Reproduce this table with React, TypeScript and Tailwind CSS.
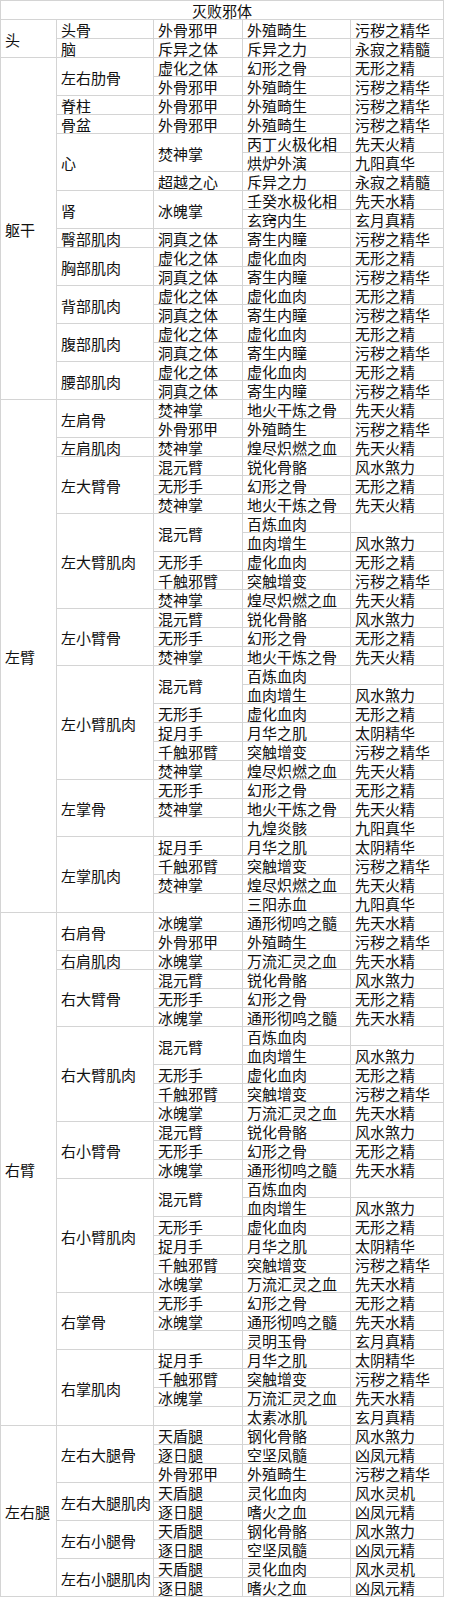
type Line = [string, string];
type Item = { skill: string; lines: Line[] };
type Part = { name: string; items: Item[] };
type Group = { name: string; parts: Part[] };

const one = (skill: string, a: string, b: string): Item => ({ skill, lines: [[a, b]] });

const wuGu = one("外骨邪甲", "外殖畸生", "污秽之精华");
const xuTi = one("虚化之体", "虚化血肉", "无形之精");
const dongZhen = one("洞真之体", "寄生内瞳", "污秽之精华");

const hunYuanGu = one("混元臂", "锐化骨骼", "风水煞力");
const wuXingGu = one("无形手", "幻形之骨", "无形之精");
const hunYuanRou: Item = { skill: "混元臂", lines: [["百炼血肉", ""], ["血肉增生", "风水煞力"]] };
const wuXingRou = one("无形手", "虚化血肉", "无形之精");
const zhuoYue = one("捉月手", "月华之肌", "太阴精华");
const qianChu = one("千触邪臂", "突触增变", "污秽之精华");

const fenGu = one("焚神掌", "地火干炼之骨", "先天火精");
const fenRou = one("焚神掌", "煌尽炽燃之血", "先天火精");
const bingGu = one("冰魄掌", "通形彻鸣之髓", "先天水精");
const bingRou = one("冰魄掌", "万流汇灵之血", "先天水精");

const groups: Group[] = [
  {
    name: "头",
    parts: [
      { name: "头骨", items: [wuGu] },
      { name: "脑", items: [one("斥异之体", "斥异之力", "永寂之精髓")] },
    ],
  },
  {
    name: "躯干",
    parts: [
      { name: "左右肋骨", items: [one("虚化之体", "幻形之骨", "无形之精"), wuGu] },
      { name: "脊柱", items: [wuGu] },
      { name: "骨盆", items: [wuGu] },
      {
        name: "心",
        items: [
          { skill: "焚神掌", lines: [["丙丁火极化相", "先天火精"], ["烘炉外演", "九阳真华"]] },
          one("超越之心", "斥异之力", "永寂之精髓"),
        ],
      },
      { name: "肾", items: [{ skill: "冰魄掌", lines: [["壬癸水极化相", "先天水精"], ["玄窍内生", "玄月真精"]] }] },
      { name: "臀部肌肉", items: [dongZhen] },
      { name: "胸部肌肉", items: [xuTi, dongZhen] },
      { name: "背部肌肉", items: [xuTi, dongZhen] },
      { name: "腹部肌肉", items: [xuTi, dongZhen] },
      { name: "腰部肌肉", items: [xuTi, dongZhen] },
    ],
  },
  {
    name: "左臂",
    parts: [
      { name: "左肩骨", items: [fenGu, wuGu] },
      { name: "左肩肌肉", items: [fenRou] },
      { name: "左大臂骨", items: [hunYuanGu, wuXingGu, fenGu] },
      { name: "左大臂肌肉", items: [hunYuanRou, wuXingRou, qianChu, fenRou] },
      { name: "左小臂骨", items: [hunYuanGu, wuXingGu, fenGu] },
      { name: "左小臂肌肉", items: [hunYuanRou, wuXingRou, zhuoYue, qianChu, fenRou] },
      { name: "左掌骨", items: [wuXingGu, fenGu, one("", "九煌炎骸", "九阳真华")] },
      { name: "左掌肌肉", items: [zhuoYue, qianChu, fenRou, one("", "三阳赤血", "九阳真华")] },
    ],
  },
  {
    name: "右臂",
    parts: [
      { name: "右肩骨", items: [bingGu, wuGu] },
      { name: "右肩肌肉", items: [bingRou] },
      { name: "右大臂骨", items: [hunYuanGu, wuXingGu, bingGu] },
      { name: "右大臂肌肉", items: [hunYuanRou, wuXingRou, qianChu, bingRou] },
      { name: "右小臂骨", items: [hunYuanGu, wuXingGu, bingGu] },
      { name: "右小臂肌肉", items: [hunYuanRou, wuXingRou, zhuoYue, qianChu, bingRou] },
      { name: "右掌骨", items: [wuXingGu, bingGu, one("", "灵明玉骨", "玄月真精")] },
      { name: "右掌肌肉", items: [zhuoYue, qianChu, bingRou, one("", "太素冰肌", "玄月真精")] },
    ],
  },
  {
    name: "左右腿",
    parts: [
      {
        name: "左右大腿骨",
        items: [one("天盾腿", "钢化骨骼", "风水煞力"), one("逐日腿", "空坚凤髓", "凶凤元精"), wuGu],
      },
      { name: "左右大腿肌肉", items: [one("天盾腿", "灵化血肉", "风水灵机"), one("逐日腿", "嗜火之血", "凶凤元精")] },
      { name: "左右小腿骨", items: [one("天盾腿", "钢化骨骼", "风水煞力"), one("逐日腿", "空坚凤髓", "凶凤元精")] },
      { name: "左右小腿肌肉", items: [one("天盾腿", "灵化血肉", "风水灵机"), one("逐日腿", "嗜火之血", "凶凤元精")] },
    ],
  },
];

// grid row spans, written out so Tailwind picks them up
const span: Record<number, string> = {
  1: "row-span-1",
  2: "row-span-2",
  3: "row-span-3",
  4: "row-span-4",
  5: "row-span-5",
  6: "row-span-6",
  9: "row-span-9",
  18: "row-span-18",
  27: "row-span-27",
};
const colStart = ["col-start-1", "col-start-2", "col-start-3", "col-start-4", "col-start-5"];

const countPart = (p: Part) => p.items.reduce((n, it) => n + it.lines.length, 0);
const countGroup = (g: Group) => g.parts.reduce((n, p) => n + countPart(p), 0);

function Cell({ col, rows = 1, children }: { col: number; rows?: number; children?: React.ReactNode }) {
  return (
    <div
      className={`${colStart[col]} ${span[rows]} bg-white flex items-center px-1 pt-[2px] leading-[16px] whitespace-nowrap`}
    >
      {children}
    </div>
  );
}

function GroupCells({ group }: { group: Group }) {
  const cells: React.ReactNode[] = [];
  group.parts.forEach((part, pi) => {
    part.items.forEach((item, ii) => {
      item.lines.forEach((line, li) => {
        const k = `${pi}-${ii}-${li}`;
        if (pi === 0 && ii === 0 && li === 0)
          cells.push(
            <Cell key={`g${k}`} col={0} rows={countGroup(group)}>
              {group.name}
            </Cell>
          );
        if (ii === 0 && li === 0)
          cells.push(
            <Cell key={`p${k}`} col={1} rows={countPart(part)}>
              {part.name}
            </Cell>
          );
        if (li === 0)
          cells.push(
            <Cell key={`s${k}`} col={2} rows={item.lines.length}>
              {item.skill}
            </Cell>
          );
        cells.push(
          <Cell key={`a${k}`} col={3}>
            {line[0]}
          </Cell>
        );
        cells.push(
          <Cell key={`b${k}`} col={4}>
            {line[1]}
          </Cell>
        );
      });
    });
  });
  return <>{cells}</>;
}

export default function App() {
  return (
    <div className="bg-white min-h-screen">
      <div
        className="grid w-[444px] grid-cols-[55px_96px_88px_107px_92px] auto-rows-[18px] gap-px p-px bg-[#d4d4d4] text-[15px] text-[#111]"
        style={{ fontFamily: '"Noto Sans CJK SC", "Noto Sans", sans-serif' }}
      >
        <div className="col-span-5 bg-white flex items-center justify-center pt-[2px] leading-[16px]">
          灭败邪体
        </div>
        {groups.map((g) => (
          <GroupCells key={g.name} group={g} />
        ))}
      </div>
    </div>
  );
}
